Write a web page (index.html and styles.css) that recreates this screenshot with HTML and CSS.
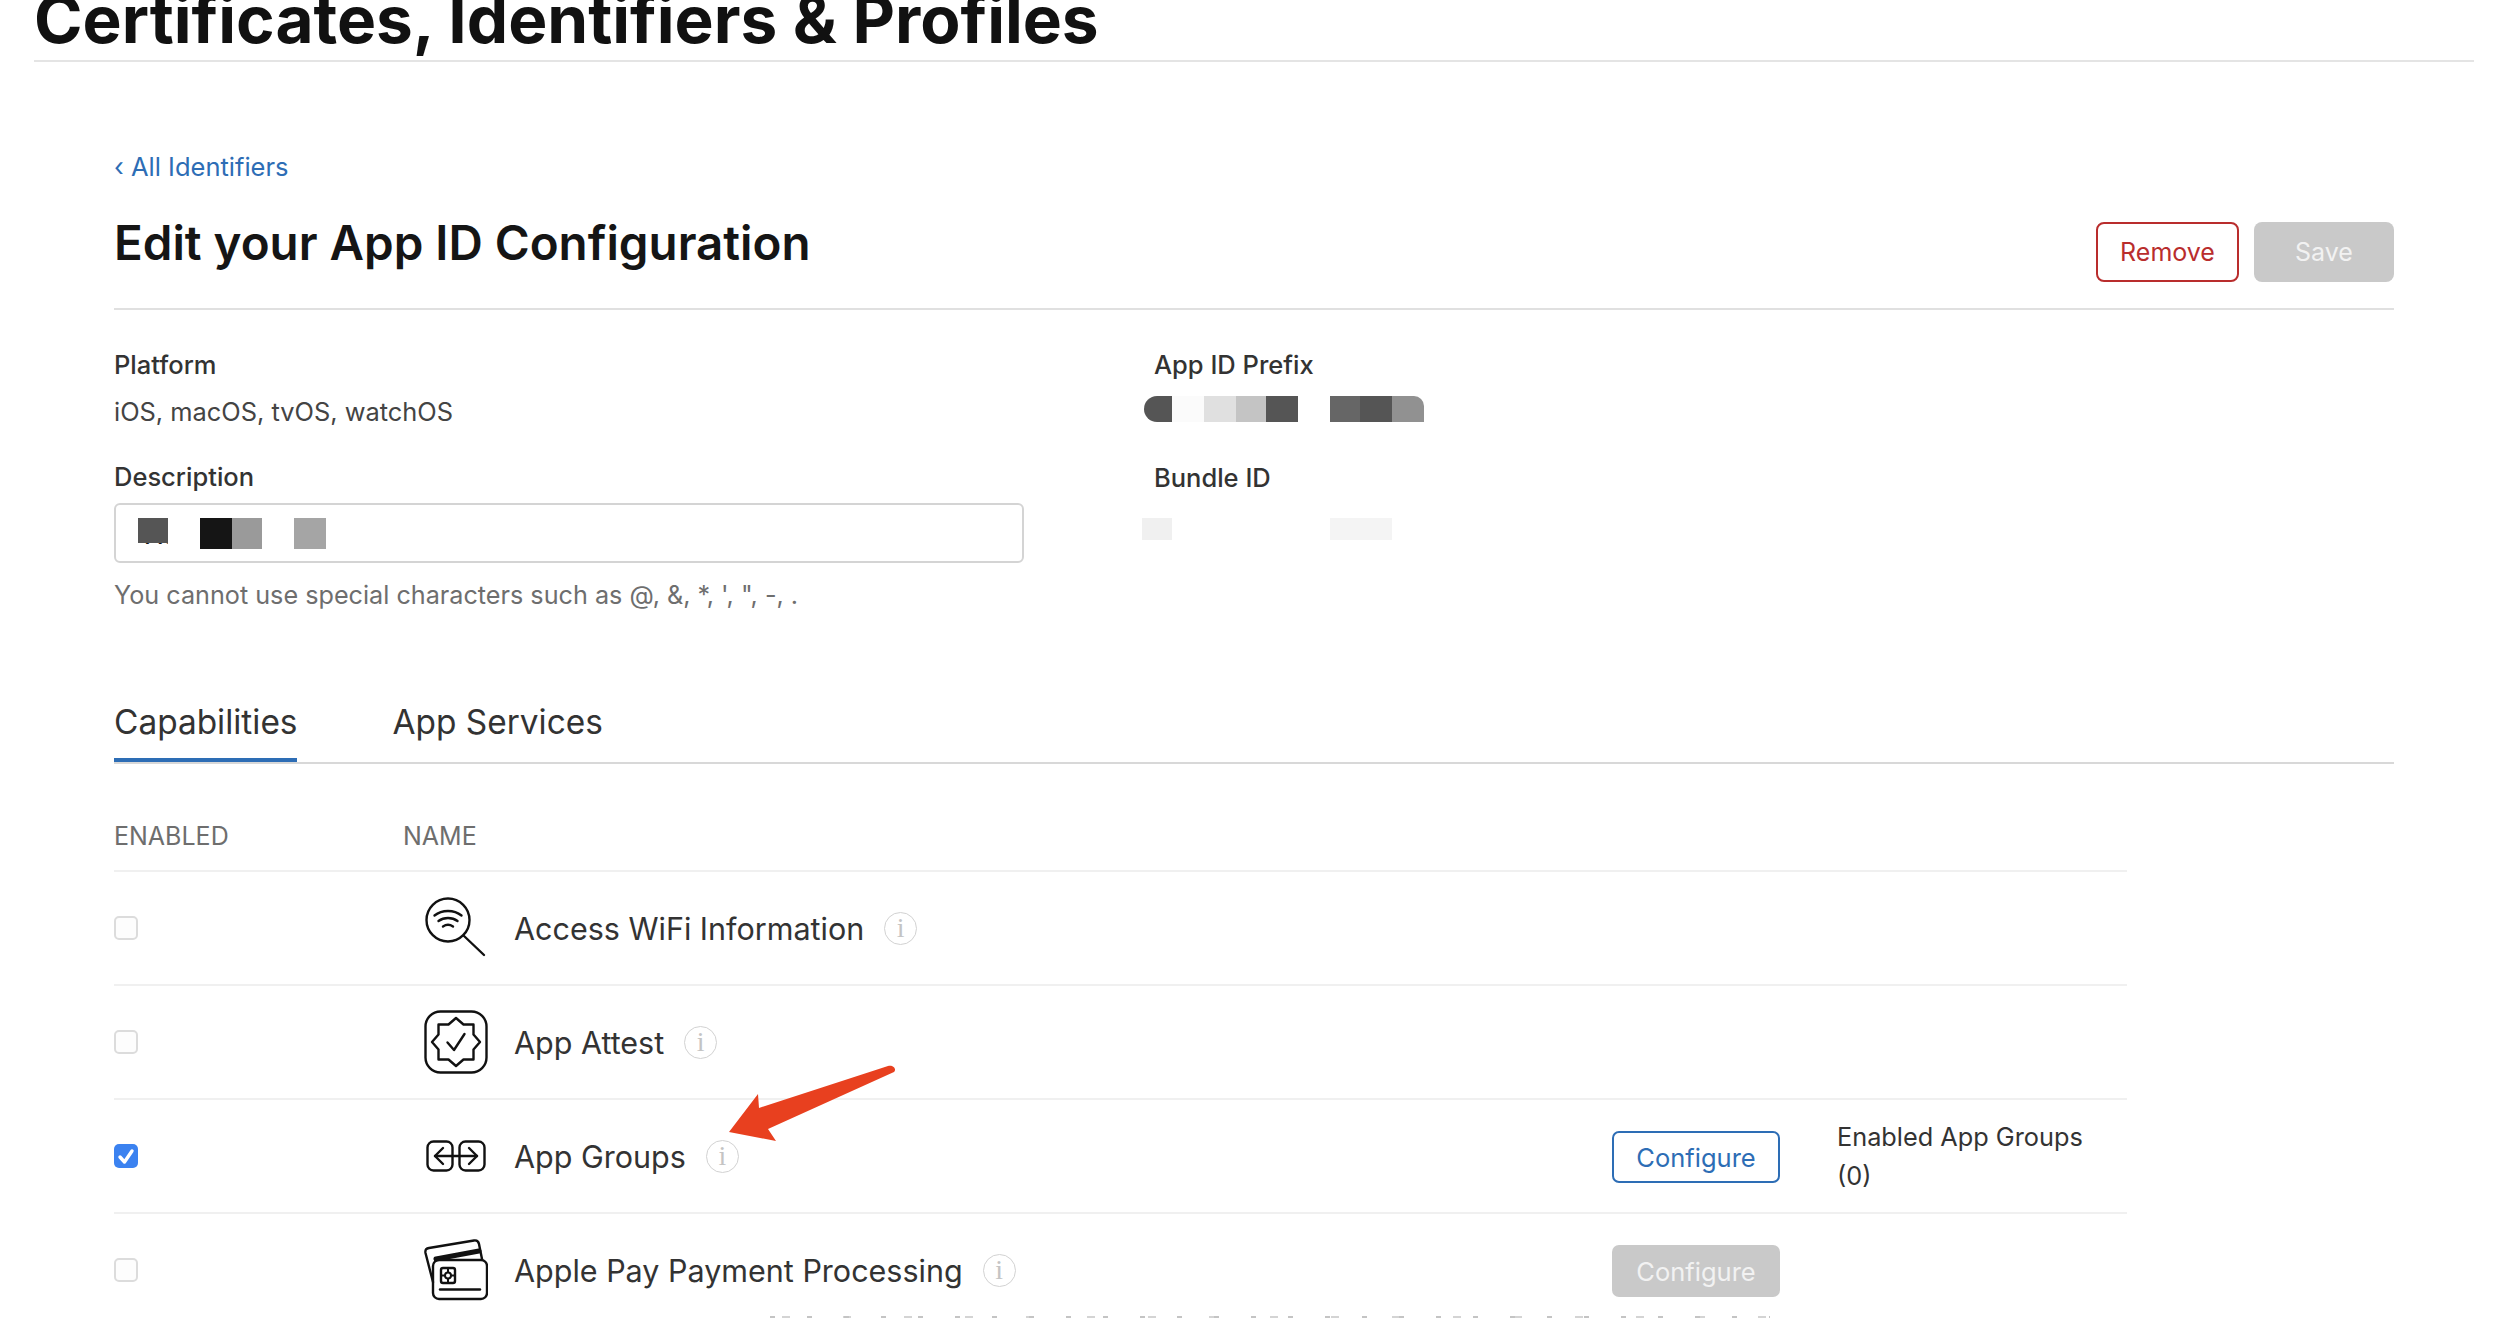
FILE: index.html
```html
<!DOCTYPE html>
<html lang="en">
<head>
  <meta charset="UTF-8">
  <meta name="viewport" content="width=device-width, initial-scale=1.0">
  <title>Certificates, Identifiers &amp; Profiles</title>
  <link rel="stylesheet" href="styles.css">
</head>
<body>
  <header class="page-header">
    <h1>Certificates, Identifiers &amp; Profiles</h1>
  </header>

  <main class="content">
    <a class="back-link" href="#">&#8249; All Identifiers</a>

    <div class="title-row">
      <h2>Edit your App ID Configuration</h2>
      <div class="actions">
        <button class="btn btn-remove">Remove</button>
        <button class="btn btn-save">Save</button>
      </div>
    </div>

    <div class="details">
      <div class="col-left">
        <div class="label">Platform</div>
        <div class="value">iOS, macOS, tvOS, watchOS</div>
        <div class="label label-desc">Description</div>
        <div class="text-input">
          <span class="input-text">Xc</span>
          <span class="blur s30 c55 short"></span>
          <span class="blur s32 c15 gap-a"></span>
          <span class="blur s30 c9a"></span>
          <span class="blur s32 ca5 gap-b"></span>
        </div>
        <div class="hint">You cannot use special characters such as @, &amp;, *, ', ", -, .</div>
      </div>
      <div class="col-right">
        <div class="label">App ID Prefix</div>
        <div class="mosaic">
          <span class="blur s28 c55 round-left"></span>
          <span class="blur s32 cfb"></span>
          <span class="blur s32 ce0"></span>
          <span class="blur s30 cc4"></span>
          <span class="blur s32 c55"></span>
          <span class="blur s30 c66 gap-c"></span>
          <span class="blur s32 c55"></span>
          <span class="blur s32 c91 round-right"></span>
        </div>
        <div class="label label-bundle">Bundle ID</div>
        <div class="mosaic mosaic-light">
          <span class="blur s30 cf0"></span>
          <span class="blur s62 cf4 gap-d"></span>
        </div>
      </div>
    </div>

    <div class="tabs">
      <div class="tab tab-active">Capabilities</div>
      <div class="tab">App Services</div>
    </div>

    <div class="cap-table">
      <div class="cap-head">
        <div class="cell-check">ENABLED</div>
        <div>NAME</div>
      </div>

      <div class="cap-row">
        <div class="cell-check"><span class="checkbox"></span></div>
        <div class="cell-icon">
          <svg width="64" height="64" viewBox="0 0 64 64" fill="none" stroke="#111" stroke-width="2.4" stroke-linecap="round">
            <circle cx="24" cy="24" r="21.5"/>
            <line x1="39.5" y1="39.5" x2="60" y2="59"/>
            <path d="M10.5 19.5C18 13.5 30 13.5 37.5 19.5"/>
            <path d="M14.5 25C20 21 28 21 33.5 25"/>
            <path d="M19 30.5C22 28.5 26 28.5 29 30.5"/>
          </svg>
        </div>
        <div class="cap-name">Access WiFi Information</div>
        <span class="info">i</span>
      </div>

      <div class="cap-row">
        <div class="cell-check"><span class="checkbox"></span></div>
        <div class="cell-icon">
          <svg width="64" height="64" viewBox="0 0 64 64" fill="none" stroke="#111" stroke-width="2.4" stroke-linecap="round" stroke-linejoin="round">
            <rect x="1.500" y="1.500" width="61" height="61" rx="15"/>
            <path d="M32 8L39.5 14.5H49.5V24.500L56 32L49.5 39.5V49.5H39.5L32 56L24.5 49.5H14.5V39.5L8 32L14.5 24.5V14.5H24.5Z"/>
            <path d="M23.5 32.5L30 40L40.5 24"/>
          </svg>
        </div>
        <div class="cap-name">App Attest</div>
        <span class="info">i</span>
      </div>

      <div class="cap-row">
        <div class="cell-check"><span class="checkbox checkbox-on">
          <svg width="24" height="24" viewBox="0 0 24 24" fill="none" stroke="#fff" stroke-width="3.4" stroke-linecap="round" stroke-linejoin="round">
            <path d="M6 13L10.5 18L18 7"/>
          </svg>
        </span></div>
        <div class="cell-icon">
          <svg width="60" height="32" viewBox="0 0 60 32" fill="none" stroke="#111" stroke-width="2.4" stroke-linecap="round" stroke-linejoin="round">
            <rect x="1.500" y="1.500" width="25" height="29" rx="6"/>
            <rect x="33.5" y="1.500" width="25" height="29" rx="6"/>
            <line x1="9" y1="16" x2="51" y2="16"/>
            <path d="M17 8L9 16L17 24"/>
            <path d="M43 8L51 16L43 24"/>
          </svg>
        </div>
        <div class="cap-name">App Groups</div>
        <span class="info">i</span>
        <button class="btn-config">Configure</button>
        <div class="cap-note">Enabled App Groups<br>(0)</div>
      </div>

      <div class="cap-row">
        <div class="cell-check"><span class="checkbox"></span></div>
        <div class="cell-icon">
          <svg width="64" height="62" viewBox="0 0 64 62" fill="none" stroke="#111" stroke-width="2.4" stroke-linecap="round" stroke-linejoin="round">
            <path d="M9 43L1.500 14C1 11 2 9.500 5 9L50 1.500C53 1 54.500 2.500 55 5L58 20"/>
            <path d="M12 20L55 12" stroke-width="5"/>
            <rect x="9" y="21" width="54" height="39" rx="6"/>
            <rect x="17" y="29" width="14" height="15" rx="2"/>
            <circle cx="24" cy="36.5" r="3" stroke-width="2"/>
            <path d="M24 29V33M24 40V44M17 36.5H21M27 36.5H31" stroke-width="2"/>
            <line x1="16" y1="50.5" x2="56" y2="50.5"/>
          </svg>
        </div>
        <div class="cap-name">Apple Pay Payment Processing</div>
        <span class="info">i</span>
        <button class="btn-config btn-config-off">Configure</button>
      </div>
    </div>
  </main>

  <svg class="arrow" width="172" height="80" viewBox="0 0 172 80">
    <path d="M2 71L31 33L32 47L161 5C166 3.500 170 8 167 11L41 68L49 80Z" fill="#e8401f"/>
  </svg>
  <div class="cut-marks"></div>
</body>
</html>
```

FILE: styles.css
```css
* {
  box-sizing: border-box;
}
html, body {
  height: 1318px;
  overflow: hidden;
}
body {
  margin: 0;
  background-color: #fff;
  color: #333;
  font-family: Inter, "Liberation Sans", sans-serif;
  font-size: 26px;
  position: relative;
}

.page-header {
  margin: 0 36px 0 34px;
  height: 62px;
  border-bottom: 2px solid #e4e4e4;
  overflow: hidden;
}
.page-header h1 {
  margin: -21px 0 0;
  font-size: 65.7px;
  line-height: 80px;
  font-weight: 700;
  color: #111;
  white-space: nowrap;
}

.content {
  padding: 89px 116px 0 114px;
}
.back-link {
  display: block;
  height: 32px;
  font-size: 25.5px;
  line-height: 32px;
  color: #2d6db5;
  text-decoration: none;
}

.title-row {
  display: flex;
  justify-content: space-between;
  align-items: flex-start;
  height: 127px;
  border-bottom: 2px solid #e0e0e0;
  padding-top: 32px;
}
.title-row h2 {
  margin: 0;
  font-size: 47.5px;
  line-height: 56px;
  font-weight: 600;
  color: #151515;
}
.actions {
  display: flex;
  gap: 15px;
  padding-top: 7px;
}
.btn {
  height: 60px;
  border-radius: 8px;
  font-family: inherit;
  font-size: 25px;
  padding: 0;
}
.btn-remove {
  width: 143px;
  border: 2px solid #b92d2d;
  background-color: #fff;
  color: #b92d2d;
}
.btn-save {
  width: 140px;
  border: none;
  background-color: #c9c9c9;
  color: #f2f2f2;
}

.details {
  display: flex;
  padding-top: 39px;
  height: 388px;
}
.col-left {
  width: 910px;
}
.col-right {
  margin-left: 130px;
}
.label {
  height: 32px;
  line-height: 32px;
  font-size: 25.5px;
  font-weight: 500;
  color: #333;
}
.value {
  margin-top: 15px;
  height: 32px;
  line-height: 32px;
  font-size: 25.4px;
  color: #444;
}
.label-desc {
  margin-top: 33px;
}
.text-input {
  position: relative;
  display: flex;
  align-items: flex-start;
  margin-top: 10px;
  height: 60px;
  padding: 13px 0 0 22px;
  border: 2px solid #d4d4d4;
  border-radius: 6px;
}
.input-text {
  position: absolute;
  left: 29px;
  top: 14px;
  width: 23px;
  overflow: hidden;
  font-size: 26px;
  line-height: 32px;
  color: #111;
}
.hint {
  margin-top: 16px;
  height: 32px;
  line-height: 32px;
  font-size: 25.2px;
  color: #6e6e6e;
}

/* redacted values in the screenshot */
.mosaic {
  display: flex;
  margin: 15px 0 0 -10px;
  height: 26px;
}
.label-bundle {
  margin-top: 40px;
}
.mosaic-light {
  margin-top: 24px;
  height: 22px;
  margin-left: -12px;
}
.blur {
  position: relative;
  display: block;
  height: 100%;
}
.text-input .blur {
  height: 31px;
}
.text-input .short {
  height: 25px;
}
.round-left {
  border-radius: 13px 0 0 13px;
}
.round-right {
  border-radius: 0 10px 0 0;
}
.s28 { width: 28px; }
.s30 { width: 30px; }
.s32 { width: 32px; }
.s62 { width: 62px; }
.c15 { background-color: #151515; }
.c55 { background-color: #555; }
.c66 { background-color: #666; }
.c91 { background-color: #919191; }
.c9a { background-color: #9a9a9a; }
.ca5 { background-color: #a5a5a5; }
.cc4 { background-color: #c4c4c4; }
.ce0 { background-color: #e0e0e0; }
.cf0 { background-color: #f0f0f0; }
.cf4 { background-color: #f4f4f4; }
.cfb { background-color: #fbfbfb; }
.gap-a { margin-left: 32px; }
.gap-b { margin-left: 32px; }
.gap-c { margin-left: 32px; }
.gap-d { margin-left: 158px; }

.tabs {
  display: flex;
  gap: 95px;
  height: 66px;
  border-bottom: 2px solid #d8d8d8;
}
.tab {
  height: 64px;
  padding-top: 2px;
  line-height: 44px;
  font-size: 33.4px;
  color: #333;
}
.tab-active {
  border-bottom: 4px solid #2d6db5;
  height: 64px;
}

.cap-table {
  width: 2013px;
}
.cap-head {
  display: flex;
  align-items: center;
  height: 108px;
  padding-top: 38px;
  font-size: 25px;
  color: #6e6e6e;
  border-bottom: 2px solid #f0f0f0;
}
.cell-check {
  width: 289px;
  flex-shrink: 0;
}
.cap-row {
  display: flex;
  align-items: center;
  height: 114px;
  border-bottom: 2px solid #f0f0f0;
}
.checkbox {
  display: block;
  width: 24px;
  height: 24px;
  border: 2px solid #dcdcdc;
  border-radius: 5px;
  background-color: #fdfdfd;
}
.checkbox-on {
  border: none;
  background-color: #3b82f0;
}
.checkbox-on svg {
  display: block;
}
.cell-icon {
  display: flex;
  justify-content: center;
  width: 64px;
  margin-left: 21px;
  margin-right: 26px;
  flex-shrink: 0;
}
.cap-name {
  font-size: 30.5px;
  color: #333;
}
.info {
  width: 33px;
  height: 33px;
  margin-left: 20px;
  border: 1.5px solid #d2d2d2;
  border-radius: 50%;
  color: #c4c4c4;
  font-family: "Liberation Serif", serif;
  font-size: 28px;
  line-height: 30px;
  text-align: center;
}
.btn-config {
  width: 168px;
  height: 52px;
  margin-top: 2px;
  margin-left: auto;
  border: 2px solid #2d6db5;
  border-radius: 7px;
  background-color: #fff;
  color: #2d6db5;
  font-family: inherit;
  font-size: 25.5px;
  padding: 0;
}
.btn-config-off {
  border: none;
  background-color: #c9c9c9;
  color: #f2f2f2;
  margin-right: 347px;
}
.cap-note {
  width: 290px;
  margin-left: 57px;
  line-height: 39px;
  font-size: 25.3px;
  color: #333;
}

.arrow {
  position: absolute;
  left: 727px;
  top: 1061px;
}
/* tops of a line of text cut off by the bottom of the screenshot */
.cut-marks {
  position: absolute;
  left: 770px;
  top: 1316px;
  width: 1000px;
  height: 2px;
  background:
    repeating-linear-gradient(90deg, #c4c4c4 0 5px, transparent 5px 37px),
    repeating-linear-gradient(90deg, transparent 0 12px, #d4d4d4 12px 20px, transparent 20px 61px);
}
```
